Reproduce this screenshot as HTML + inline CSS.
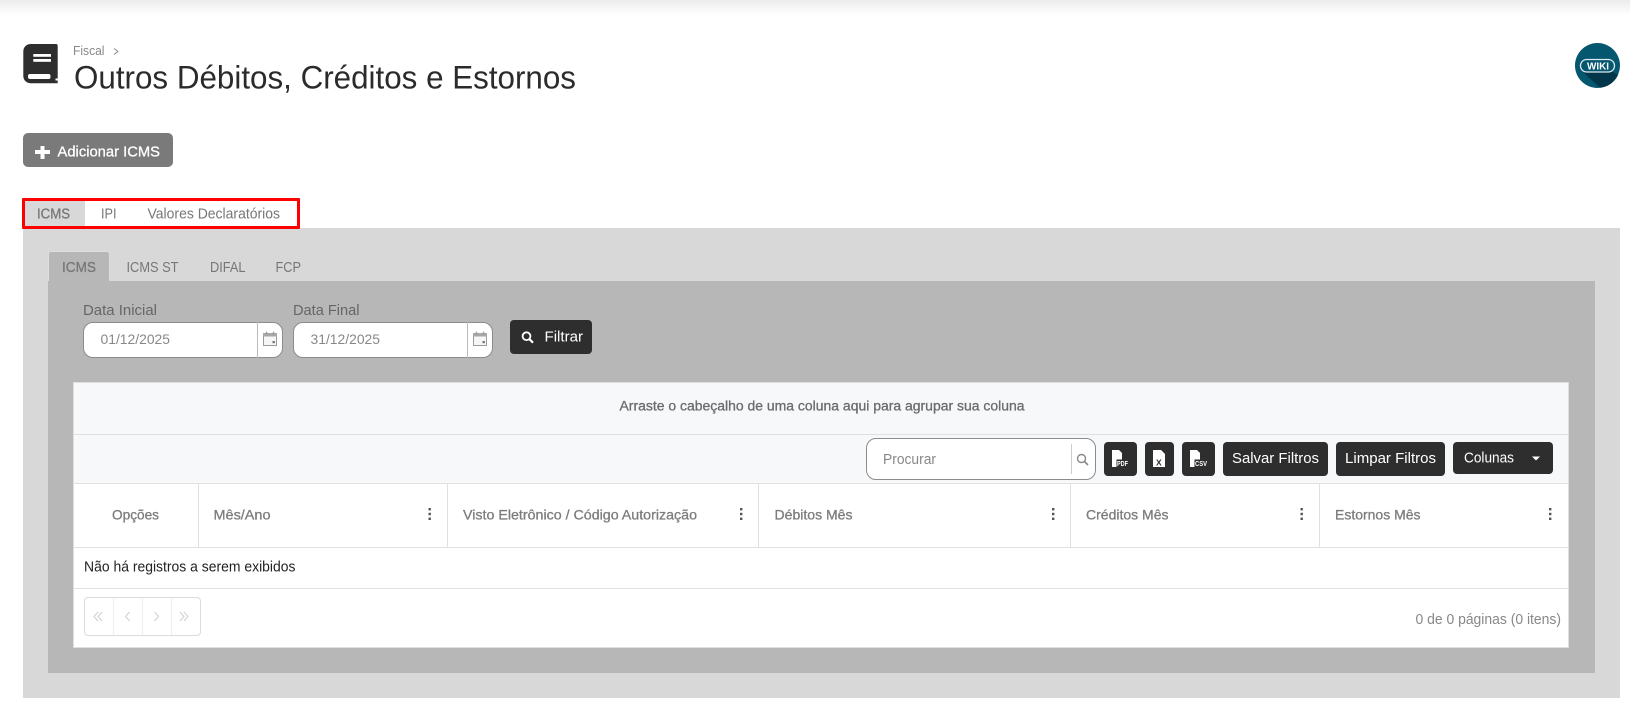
<!DOCTYPE html>
<html lang="pt-BR">
<head>
<meta charset="utf-8">
<title>Outros Débitos, Créditos e Estornos</title>
<style>
html,body{margin:0;padding:0;background:#fff}
body{position:relative;width:1630px;height:706px;overflow:hidden;font-family:"Liberation Sans",sans-serif}
.b{position:absolute;box-sizing:border-box}
.btn{background:#2e2e2e;border-radius:4px}
#ov{position:absolute;left:0;top:0}
#ov text{font-family:"Liberation Sans",sans-serif;white-space:pre}
.m{stroke-width:.3px}
</style>
</head>
<body>
<div class="b" style="left:0;top:0;width:1630px;height:16px;background:linear-gradient(#ebebeb,#f6f6f6 50%,#fff)"></div>

<!-- panels -->
<div class="b" style="left:23px;top:228px;width:1597px;height:470px;background:#d8d8d8"></div>
<div class="b" style="left:48px;top:251px;width:62px;height:31px;background:#b7b7b7;border-radius:3px 3px 0 0;border:1px solid #dedede;border-bottom:0"></div>
<div class="b" style="left:48px;top:281px;width:1547px;height:392px;background:#b7b7b7"></div>

<!-- top tabs -->
<div class="b" style="left:23px;top:198px;width:62px;height:30px;background:#d8d8d8"></div>
<div class="b" style="left:22px;top:198px;width:278px;height:31px;border:3px solid #f00;border-radius:1px"></div>

<!-- add button -->
<div class="b" style="left:23px;top:133px;width:150px;height:34px;background:#7a7a7a;border-radius:5px"></div>

<!-- date inputs -->
<div class="b" style="left:83px;top:322px;width:200px;height:36px;background:#fff;border:1px solid #8c8c8c;border-radius:10px"></div>
<div class="b" style="left:257px;top:322px;width:1px;height:36px;background:#bbb"></div>
<div class="b" style="left:293px;top:322px;width:200px;height:36px;background:#fff;border:1px solid #8c8c8c;border-radius:10px"></div>
<div class="b" style="left:467px;top:322px;width:1px;height:36px;background:#bbb"></div>
<div class="b btn" style="left:510px;top:320px;width:82px;height:34px"></div>

<!-- grid -->
<div class="b" style="left:73px;top:382px;width:1496px;height:266px;background:#fff;border:1px solid #dfdfdf"></div>
<div class="b" style="left:74px;top:383px;width:1494px;height:100px;background:#f7f8fa"></div>
<div class="b" style="left:74px;top:434px;width:1494px;height:1px;background:#e0e0e0"></div>
<div class="b" style="left:74px;top:483px;width:1494px;height:1px;background:#e0e0e0"></div>
<div class="b" style="left:74px;top:547px;width:1494px;height:1px;background:#e0e0e0"></div>
<div class="b" style="left:74px;top:588px;width:1494px;height:1px;background:#e0e0e0"></div>
<div class="b" style="left:198px;top:484px;width:1px;height:63px;background:#e0e0e0"></div>
<div class="b" style="left:447px;top:484px;width:1px;height:63px;background:#e0e0e0"></div>
<div class="b" style="left:758px;top:484px;width:1px;height:63px;background:#e0e0e0"></div>
<div class="b" style="left:1070px;top:484px;width:1px;height:63px;background:#e0e0e0"></div>
<div class="b" style="left:1319px;top:484px;width:1px;height:63px;background:#e0e0e0"></div>
<div class="b" style="left:1568px;top:484px;width:1px;height:63px;background:#e0e0e0"></div>

<!-- toolbar -->
<div class="b" style="left:866px;top:438px;width:230px;height:42px;background:#fff;border:1px solid #8c8c8c;border-radius:10px"></div>
<div class="b" style="left:1071px;top:444px;width:1px;height:30px;background:#ccc"></div>
<div class="b btn" style="left:1104px;top:442px;width:33px;height:34px"></div>
<div class="b btn" style="left:1145px;top:442px;width:29px;height:34px"></div>
<div class="b btn" style="left:1182px;top:442px;width:33px;height:34px"></div>
<div class="b btn" style="left:1223px;top:442px;width:105px;height:34px"></div>
<div class="b btn" style="left:1336px;top:442px;width:109px;height:34px"></div>
<div class="b btn" style="left:1453px;top:442px;width:100px;height:32px"></div>

<!-- pager -->
<div class="b" style="left:84px;top:597px;width:117px;height:39px;border:1px solid #dcdcdc;border-radius:4px"></div>
<div class="b" style="left:113px;top:598px;width:1px;height:37px;background:#eee"></div>
<div class="b" style="left:142px;top:598px;width:1px;height:37px;background:#eee"></div>
<div class="b" style="left:171px;top:598px;width:1px;height:37px;background:#eee"></div>

<svg id="ov" width="1630" height="706" viewBox="0 0 1630 706" xmlns="http://www.w3.org/2000/svg">
  <!-- book icon -->
  <path d="M31 44H56Q57.7 44 57.7 46V78.5H55.5V80.5H57.7V83.3H31C26.5 83.3 23.3 80 23.3 76V51.5C23.3 47 26.5 44 31 44Z" fill="#2e2e2e"/>
  <rect x="28" y="74" width="22.5" height="5" rx="2" fill="#fff"/>
  <rect x="33.3" y="54" width="17.7" height="2.8" fill="#fff"/>
  <rect x="33.3" y="59" width="17.7" height="2.8" fill="#fff"/>

  <!-- breadcrumb / title -->
  <text x="73" y="55" font-size="12.5" fill="#888" textLength="31.5" lengthAdjust="spacingAndGlyphs">Fiscal</text>
  <path d="M114 48.5L118 51.5L114 54.5" fill="none" stroke="#888" stroke-width="1"/>
  <text x="74" y="88.5" font-size="32.5" fill="#2b2b2b" textLength="502" lengthAdjust="spacingAndGlyphs">Outros Débitos, Créditos e Estornos</text>

  <!-- wiki -->
  <circle cx="1597.5" cy="65.5" r="22.5" fill="#05566f"/>
  <path d="M1583 72H1613L1618 75A22.5 22.5 0 0 1 1600 87.8Z" fill="#03364a"/>
  <rect x="1580.5" y="59.5" width="34" height="12.5" rx="6.2" fill="#05566f" stroke="#dfeaee" stroke-width="1.3"/>
  <text x="1587" y="69.5" font-size="10" font-weight="bold" fill="#fff" textLength="22" lengthAdjust="spacingAndGlyphs">WIKI</text>

  <!-- add button -->
  <path d="M40.5 146H44.5V150H50V154H44.5V159H40.5V154H35V150H40.5Z" fill="#fff"/>
  <text x="57.5" y="156.5" font-size="15" fill="#fff" class="m" stroke="#fff" textLength="102.5" lengthAdjust="spacingAndGlyphs">Adicionar ICMS</text>

  <!-- top tabs -->
  <text x="37" y="218.5" font-size="14.5" fill="#777" class="m" stroke="#777" textLength="33" lengthAdjust="spacingAndGlyphs">ICMS</text>
  <text x="101" y="218.5" font-size="14.5" fill="#777" textLength="15.5" lengthAdjust="spacingAndGlyphs">IPI</text>
  <text x="147.5" y="218.5" font-size="14.5" fill="#777" textLength="132.5" lengthAdjust="spacingAndGlyphs">Valores Declaratórios</text>

  <!-- inner tabs -->
  <text x="62" y="272" font-size="14.5" fill="#777" class="m" stroke="#777" textLength="34" lengthAdjust="spacingAndGlyphs">ICMS</text>
  <text x="126.5" y="272" font-size="14.5" fill="#777" textLength="52" lengthAdjust="spacingAndGlyphs">ICMS ST</text>
  <text x="210" y="272" font-size="14.5" fill="#777" textLength="35.5" lengthAdjust="spacingAndGlyphs">DIFAL</text>
  <text x="275.5" y="272" font-size="14.5" fill="#777" textLength="25.5" lengthAdjust="spacingAndGlyphs">FCP</text>

  <!-- date form -->
  <text x="83" y="315" font-size="15" fill="#666" textLength="74" lengthAdjust="spacingAndGlyphs">Data Inicial</text>
  <text x="293" y="315" font-size="15" fill="#666" textLength="66.5" lengthAdjust="spacingAndGlyphs">Data Final</text>
  <text x="100.5" y="344" font-size="14" fill="#888" textLength="69.5" lengthAdjust="spacingAndGlyphs">01/12/2025</text>
  <text x="310.5" y="344" font-size="14" fill="#888" textLength="69.5" lengthAdjust="spacingAndGlyphs">31/12/2025</text>
  <g fill="none" stroke="#9a9a9a">
    <rect x="263.5" y="333.5" width="13" height="12" fill="#f6f6f6"/>
    <rect x="263" y="333" width="14" height="3.5" fill="#a8a8a8" stroke="none"/>
    <path d="M266.5 331.7V334.5M273.5 331.7V334.5" stroke-width="1.4"/>
    <rect x="272.5" y="341" width="2.4" height="2.2" fill="#777" stroke="none"/>
  </g>
  <g fill="none" stroke="#9a9a9a">
    <rect x="473.5" y="333.5" width="13" height="12" fill="#f6f6f6"/>
    <rect x="473" y="333" width="14" height="3.5" fill="#a8a8a8" stroke="none"/>
    <path d="M476.5 331.7V334.5M483.5 331.7V334.5" stroke-width="1.4"/>
    <rect x="482.5" y="341" width="2.4" height="2.2" fill="#777" stroke="none"/>
  </g>
  <circle cx="526.5" cy="336.2" r="3.9" fill="none" stroke="#fff" stroke-width="1.8"/>
  <path d="M529.3 339L533 342.7" stroke="#fff" stroke-width="2.2"/>
  <text x="544.5" y="341.5" font-size="14.5" fill="#fff" textLength="38.5" lengthAdjust="spacingAndGlyphs">Filtrar</text>

  <!-- grid group row -->
  <text x="619.5" y="410.5" font-size="13.5" fill="#6b6b6b" class="m" stroke="#6b6b6b" textLength="405" lengthAdjust="spacingAndGlyphs">Arraste o cabeçalho de uma coluna aqui para agrupar sua coluna</text>

  <!-- toolbar -->
  <text x="883" y="464" font-size="14.5" fill="#888" textLength="53" lengthAdjust="spacingAndGlyphs">Procurar</text>
  <circle cx="1081.5" cy="458.5" r="4" fill="none" stroke="#888" stroke-width="1.4"/>
  <path d="M1084.5 461.5L1088 465" stroke="#888" stroke-width="1.6"/>

  <path d="M1112 450H1119L1122 453V467H1112Z" fill="#fff"/>
  <rect x="1116.5" y="459.5" width="12" height="7.5" fill="#2e2e2e"/>
  <text x="1117" y="466" font-size="7" font-weight="bold" fill="#fff" textLength="11" lengthAdjust="spacingAndGlyphs">PDF</text>

  <path d="M1153 450H1161L1165 454V467H1153Z" fill="#fff"/>
  <text x="1156" y="465.5" font-size="8.5" font-weight="bold" fill="#2e2e2e">X</text>

  <path d="M1190 450H1197L1200 453V467H1190Z" fill="#fff"/>
  <rect x="1194.5" y="459.5" width="13" height="7.5" fill="#2e2e2e"/>
  <text x="1195" y="466" font-size="7" font-weight="bold" fill="#fff" textLength="12" lengthAdjust="spacingAndGlyphs">CSV</text>

  <text x="1232" y="463" font-size="15" fill="#fff" textLength="87" lengthAdjust="spacingAndGlyphs">Salvar Filtros</text>
  <text x="1345" y="463" font-size="15" fill="#fff" textLength="91" lengthAdjust="spacingAndGlyphs">Limpar Filtros</text>
  <text x="1464" y="462.5" font-size="14.5" fill="#fff" textLength="50" lengthAdjust="spacingAndGlyphs">Colunas</text>
  <path d="M1532 456.5H1540L1536 460.5Z" fill="#fff"/>

  <!-- headers -->
  <g font-size="14" fill="#7c7c7c" stroke="#7c7c7c">
    <text x="112" y="519.5" class="m" textLength="47" lengthAdjust="spacingAndGlyphs">Opções</text>
    <text x="213.5" y="519.5" class="m" textLength="57" lengthAdjust="spacingAndGlyphs">Mês/Ano</text>
    <text x="463" y="519.5" class="m" textLength="234" lengthAdjust="spacingAndGlyphs">Visto Eletrônico / Código Autorização</text>
    <text x="774.5" y="519.5" class="m" textLength="78" lengthAdjust="spacingAndGlyphs">Débitos Mês</text>
    <text x="1086" y="519.5" class="m" textLength="82.5" lengthAdjust="spacingAndGlyphs">Créditos Mês</text>
    <text x="1335" y="519.5" class="m" textLength="85.5" lengthAdjust="spacingAndGlyphs">Estornos Mês</text>
  </g>
  <g fill="#555">
    <rect x="428.5" y="508" width="2.4" height="2.4"/><rect x="428.5" y="512.8" width="2.4" height="2.4"/><rect x="428.5" y="517.6" width="2.4" height="2.4"/>
    <rect x="740" y="508" width="2.4" height="2.4"/><rect x="740" y="512.8" width="2.4" height="2.4"/><rect x="740" y="517.6" width="2.4" height="2.4"/>
    <rect x="1052" y="508" width="2.4" height="2.4"/><rect x="1052" y="512.8" width="2.4" height="2.4"/><rect x="1052" y="517.6" width="2.4" height="2.4"/>
    <rect x="1300.5" y="508" width="2.4" height="2.4"/><rect x="1300.5" y="512.8" width="2.4" height="2.4"/><rect x="1300.5" y="517.6" width="2.4" height="2.4"/>
    <rect x="1549" y="508" width="2.4" height="2.4"/><rect x="1549" y="512.8" width="2.4" height="2.4"/><rect x="1549" y="517.6" width="2.4" height="2.4"/>
  </g>

  <text x="84" y="571.5" font-size="14.5" fill="#222" textLength="211.5" lengthAdjust="spacingAndGlyphs">Não há registros a serem exibidos</text>

  <!-- pager arrows -->
  <g fill="none" stroke="#cfcfcf" stroke-width="1">
    <path d="M98 612L94 616.5L98 621M102 612L98 616.5L102 621"/>
    <path d="M129.5 612L125.5 616.5L129.5 621"/>
    <path d="M154.5 612L158.5 616.5L154.5 621"/>
    <path d="M180 612L184 616.5L180 621M184 612L188 616.5L184 621"/>
  </g>

  <text x="1415.5" y="624" font-size="14.5" fill="#888" textLength="145.5" lengthAdjust="spacingAndGlyphs">0 de 0 páginas (0 itens)</text>
</svg>
</body>
</html>
